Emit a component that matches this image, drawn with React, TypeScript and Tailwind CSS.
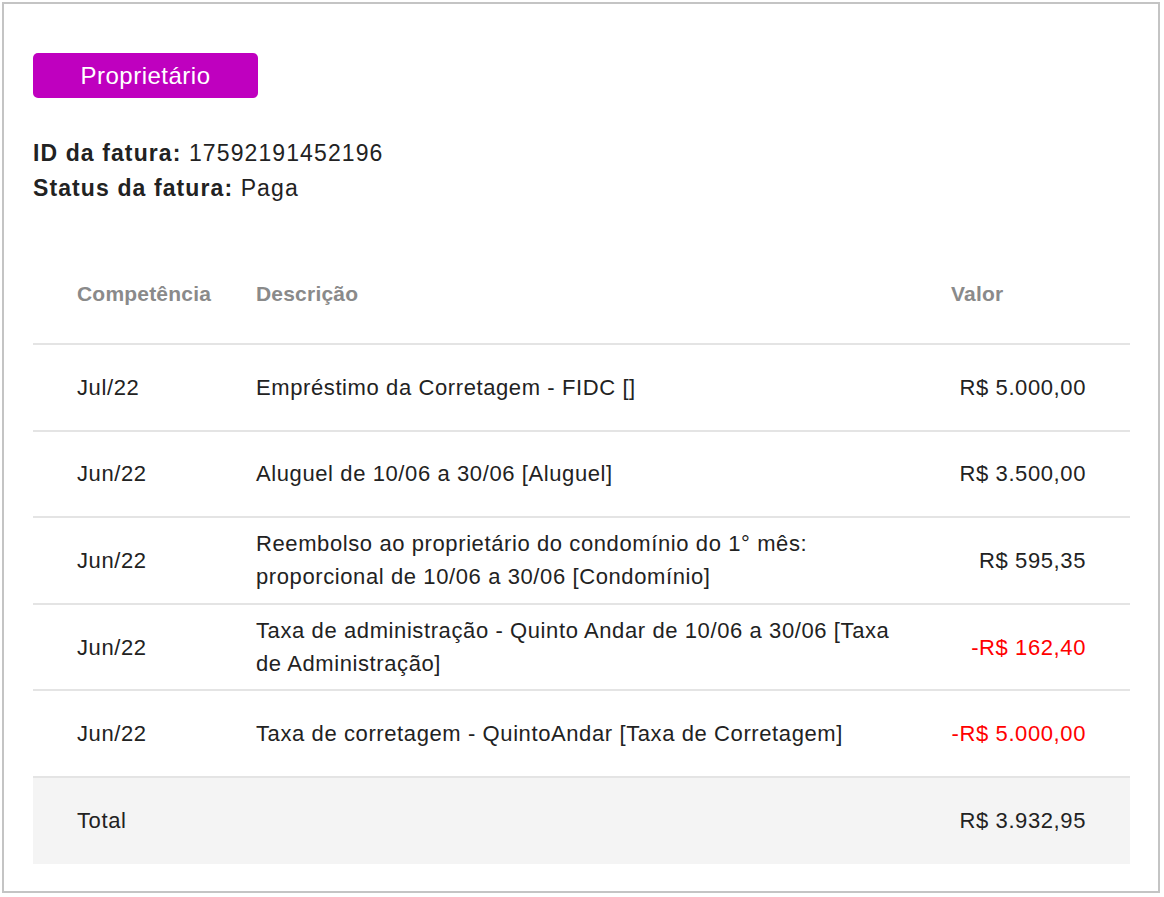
import React from "react";

interface Item {
  comp: string;
  desc: string;
  valor: string;
  negative?: boolean;
}

const items: Item[] = [
  { comp: "Jul/22", desc: "Empréstimo da Corretagem - FIDC []", valor: "R$ 5.000,00" },
  { comp: "Jun/22", desc: "Aluguel de 10/06 a 30/06 [Aluguel]", valor: "R$ 3.500,00" },
  {
    comp: "Jun/22",
    desc: "Reembolso ao proprietário do condomínio do 1° mês: proporcional de 10/06 a 30/06 [Condomínio]",
    valor: "R$ 595,35",
  },
  {
    comp: "Jun/22",
    desc: "Taxa de administração - Quinto Andar de 10/06 a 30/06 [Taxa de Administração]",
    valor: "-R$ 162,40",
    negative: true,
  },
  {
    comp: "Jun/22",
    desc: "Taxa de corretagem - QuintoAndar [Taxa de Corretagem]",
    valor: "-R$ 5.000,00",
    negative: true,
  },
];

const App: React.FC = () => {
  return (
    <div
      className="w-[1164px] h-[897px] bg-white p-[2px] text-[#222]"
      style={{ fontFamily: '"Liberation Sans", Arial, sans-serif' }}
    >
      <div className="w-[1158px] h-[891px] border-2 border-[#c4c4c4] pl-[29px] pr-[28px] pt-[49px]">
        <div className="w-[225px] h-[45px] rounded-[5px] bg-[#bf00bf] text-white text-[24px] tracking-[0.5px] flex items-center justify-center">
          Proprietário
        </div>

        <div className="mt-[38px] text-[23px] leading-[35px] tracking-[1.1px]">
          <div>
            <span className="font-bold">ID da fatura:</span> 17592191452196
          </div>
          <div>
            <span className="font-bold">Status da fatura:</span> Paga
          </div>
        </div>

        <div className="mt-[39px] w-[1097px]">
          <div className="flex h-[100px] items-center border-b-2 border-[#e4e4e4] text-[21px] tracking-[0.2px] font-bold text-[#8a8a8a]">
            <div className="w-[179px] px-[44px] whitespace-nowrap">Competência</div>
            <div className="w-[695px] px-[44px]">Descrição</div>
            <div className="w-[223px] px-[44px]">Valor</div>
          </div>

          {items.map((item, i) => (
            <div
              key={i}
              className="flex h-[86.6px] items-center border-b-2 border-[#e4e4e4] text-[22px] leading-[33px] tracking-[0.6px]"
            >
              <div className="w-[179px] px-[44px]">{item.comp}</div>
              <div className="w-[695px] pl-[44px] pr-[4px]">{item.desc}</div>
              <div
                className={`w-[223px] px-[44px] text-right whitespace-nowrap ${item.negative ? "text-[#ff0000]" : ""}`}
              >
                {item.valor}
              </div>
            </div>
          ))}

          <div className="flex h-[86px] items-center bg-[#f4f4f4] text-[22px] tracking-[0.6px]">
            <div className="w-[179px] px-[44px]">Total</div>
            <div className="w-[695px] px-[44px]"></div>
            <div className="w-[223px] px-[44px] text-right whitespace-nowrap">R$ 3.932,95</div>
          </div>
        </div>
      </div>
    </div>
  );
};

export default App;
